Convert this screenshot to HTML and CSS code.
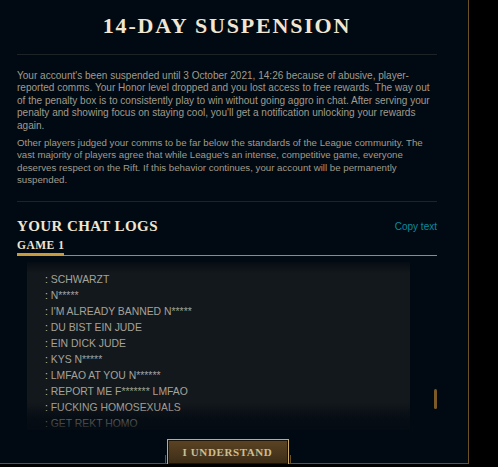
FILE: index.html
```html
<!DOCTYPE html>
<html>
<head>
<meta charset="utf-8">
<link rel="stylesheet" href="styles.css">
</head>
<body>
<div class="modal">
  <header class="head">
    <h1 class="title">14-DAY SUSPENSION</h1>
  </header>
  <div class="body">
    <p class="para">Your account's been suspended until 3 October 2021, 14:26 because of abusive, player-reported comms. Your Honor level dropped and you lost access to free rewards. The way out of the penalty box is to consistently play to win without going aggro in chat. After serving your penalty and showing focus on staying cool, you'll get a notification unlocking your rewards again.</p>
    <p class="para para2">Other players judged your comms to be far below the standards of the League community. The vast majority of players agree that while League's an intense, competitive game, everyone deserves respect on the Rift. If this behavior continues, your account will be permanently suspended.</p>
  </div>
  <section class="logs">
    <div class="logs-head">
      <h2 class="logs-title">YOUR CHAT LOGS</h2>
      <span class="copy">Copy text</span>
    </div>
    <div class="tabs">
      <span class="tab">GAME 1</span>
    </div>
    <div class="chat-row">
      <div class="chat">
        <div class="line"><span class="colon">:</span> SCHWARZT</div>
        <div class="line"><span class="colon">:</span> N*****</div>
        <div class="line"><span class="colon">:</span> I'M ALREADY BANNED N*****</div>
        <div class="line"><span class="colon">:</span> DU BIST EIN JUDE</div>
        <div class="line"><span class="colon">:</span> EIN DICK JUDE</div>
        <div class="line"><span class="colon">:</span> KYS N*****</div>
        <div class="line"><span class="colon">:</span> LMFAO AT YOU N******</div>
        <div class="line"><span class="colon">:</span> REPORT ME F******* LMFAO</div>
        <div class="line"><span class="colon">:</span> FUCKING HOMOSEXUALS</div>
        <div class="line"><span class="colon">:</span> GET REKT HOMO</div>
      </div>
      <div class="track"><div class="thumb"></div></div>
    </div>
  </section>
  <footer class="foot">
    <button class="btn">I UNDERSTAND</button>
  </footer>
</div>
</body>
</html>
```
FILE: styles.css
```css
html, body {
  margin: 0;
  padding: 0;
  background: #000;
}
.modal {
  box-sizing: border-box;
  width: 469px;
  height: 464px;
  background: #010a13;
  border-right: 1px solid #6b5226;
  border-bottom: 1px solid #6b5226;
  padding: 0 31px 0 17px;
  display: flex;
  flex-direction: column;
  position: relative;
}
.head {
  box-sizing: border-box;
  height: 55px;
  border-bottom: 1px solid #1e2328;
  display: flex;
  justify-content: center;
  padding-top: 14px;
}
.title {
  margin: 0;
  font-family: "Liberation Serif", "DejaVu Serif", serif;
  font-weight: bold;
  font-size: 22px;
  line-height: 24px;
  letter-spacing: 1.8px;
  color: #f0e6d2;
  height: 24px;
}
.body {
  border-bottom: 1px solid #1e2328;
  padding: 15px 0 14px;
}
.para {
  margin: 0;
  font-family: "Liberation Sans", Arial, sans-serif;
  font-size: 10.05px;
  line-height: 12.4px;
  color: #a09b8c;
}
.para2 {
  margin-top: 5px;
  font-size: 9.7px;
}
.logs-head {
  display: flex;
  justify-content: space-between;
  align-items: center;
  margin-top: 15px;
  height: 18px;
}
.logs-title {
  margin: 0;
  font-family: "Liberation Serif", "DejaVu Serif", serif;
  font-weight: bold;
  font-size: 15px;
  line-height: 18px;
  letter-spacing: 0.4px;
  color: #f0e6d2;
}
.copy {
  font-family: "Liberation Sans", Arial, sans-serif;
  font-size: 10px;
  color: #0a8a9c;
  padding-top: 2px;
}
.tabs {
  margin-top: 4px;
  border-bottom: 1px solid #a08a5a;
  display: flex;
}
.tab {
  font-family: "Liberation Serif", "DejaVu Serif", serif;
  font-weight: bold;
  font-size: 11.5px;
  line-height: 13px;
  letter-spacing: 0.5px;
  color: #f0e6d2;
  padding-bottom: 1px;
  border-bottom: 3px solid #c89b3c;
  margin-bottom: -1px;
  white-space: nowrap;
}
.chat-row {
  display: flex;
  margin-top: 6px;
  margin-left: 10px;
}
.chat {
  position: relative;
  width: 390px;
  height: 168px;
  box-sizing: border-box;
  padding: 10px 0 0 18px;
  background: linear-gradient(to bottom, #060c13 0px, #13181d 11px, #13181d 140px, #070d14 158px, #010a13 168px);
  font-family: "Liberation Sans", Arial, sans-serif;
  font-size: 10.4px;
  line-height: 16px;
  color: #a7a397;
  overflow: hidden;
}
.chat::after {
  content: "";
  position: absolute;
  left: 0;
  right: 0;
  bottom: 0;
  height: 24px;
  background: linear-gradient(to bottom, rgba(16, 21, 27, 0), rgba(5, 12, 19, 0.85));
}
.colon {
  color: #c8c3b4;
}
.track {
  width: 3px;
  margin-left: 24px;
}
.thumb {
  margin-top: 127px;
  width: 3px;
  height: 20px;
  border-radius: 2px;
  background: #7b5a28;
}
.foot {
  margin-top: auto;
  display: flex;
  justify-content: center;
  margin-bottom: -2px;
}
.btn {
  position: relative;
  box-sizing: border-box;
  width: 122px;
  height: 26px;
  border: 1px solid #c8aa6e;
  box-shadow: inset 0 0 0 1px #1b140a;
  background: linear-gradient(to bottom, #5c4424, #3c2c17);
  font-family: "Liberation Serif", "DejaVu Serif", serif;
  font-weight: bold;
  font-size: 11px;
  letter-spacing: 0.6px;
  color: #cdbe91;
  padding: 0;
  margin-left: 1px;
}
.btn::before,
.btn::after {
  content: "";
  position: absolute;
  bottom: 0;
  width: 1px;
  height: 9px;
  background: #6b5226;
}
.btn::before { left: -3px; }
.btn::after { right: -3px; }
```
